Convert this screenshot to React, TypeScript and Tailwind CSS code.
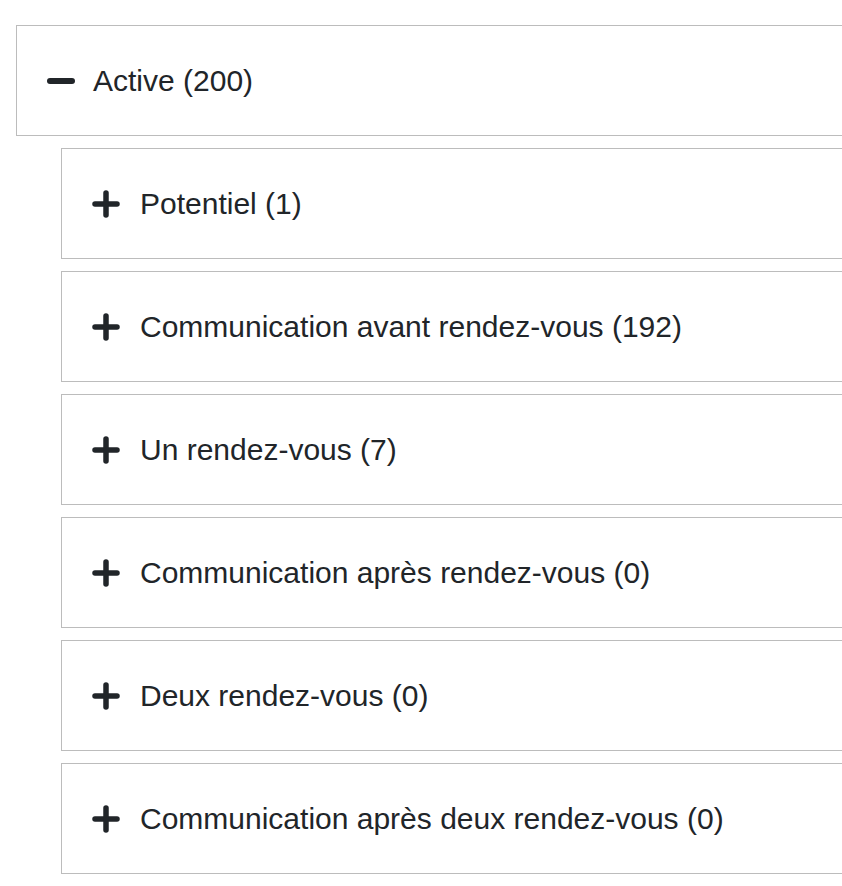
import React from 'react';

const stages = [
  { label: 'Potentiel', count: 1 },
  { label: 'Communication avant rendez-vous', count: 192 },
  { label: 'Un rendez-vous', count: 7 },
  { label: 'Communication après rendez-vous', count: 0 },
  { label: 'Deux rendez-vous', count: 0 },
  { label: 'Communication après deux rendez-vous', count: 0 },
];

const MinusIcon = () => (
  <svg width="28" height="28" viewBox="0 0 28 28" className="shrink-0">
    <line x1="3" y1="14" x2="25" y2="14" stroke="#212529" strokeWidth="6" strokeLinecap="round" />
  </svg>
);

const PlusIcon = () => (
  <svg width="28" height="28" viewBox="0 0 28 28" className="shrink-0">
    <line x1="3" y1="14" x2="25" y2="14" stroke="#212529" strokeWidth="5.5" strokeLinecap="round" />
    <line x1="14" y1="3" x2="14" y2="25" stroke="#212529" strokeWidth="5.5" strokeLinecap="round" />
  </svg>
);

export default function App() {
  return (
    <div className="w-full h-screen overflow-hidden bg-white text-[#212529] font-['Liberation_Sans',Arial,sans-serif]">
      <div className="w-[920px] pt-[25px] pl-4 flex flex-col gap-3">
        <div className="h-[111px] border border-[#bcbcbc] flex items-center pl-[30px] gap-[18px]">
          <MinusIcon />
          <span className="text-[30px] leading-none">Active (200)</span>
        </div>

        <div className="ml-[45px] flex flex-col gap-3">
          {stages.map((s) => (
            <div key={s.label} className="h-[111px] border border-[#bcbcbc] flex items-center pl-[30px] gap-5">
              <PlusIcon />
              <span className="text-[30px] leading-none">
                {s.label} ({s.count})
              </span>
            </div>
          ))}
        </div>
      </div>
    </div>
  );
}
